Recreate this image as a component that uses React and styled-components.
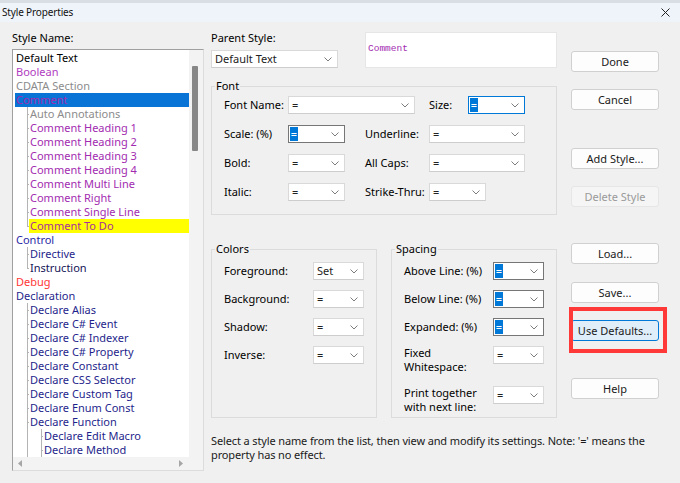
import React from 'react';
import styled, { createGlobalStyle } from 'styled-components';

const Global = createGlobalStyle`
  html, body { margin: 0; padding: 0; background: #f0f0f0; overflow: hidden; }
  body { font-family: "Noto Sans", "Open Sans", sans-serif; font-size: 11px; color: #000; }
`;

const Window = styled.div`
  width: 680px; height: 483px; display: flex; flex-direction: column;
  background: #f0f0f0; overflow: hidden;
`;
const TopStrip = styled.div`height: 3px; background: #d9dee5; flex: none;`;
const TitleBar = styled.div`
  height: 19px; flex: none; background: #eff4fa; display: flex; align-items: center;
  justify-content: space-between; padding: 0 10px 0 2px;
`;
const Title = styled.span`font-size: 10px; letter-spacing: -0.15px; color: #111; line-height: 19px;`;

const Body = styled.div`display: flex; padding: 8px 0 0 12px; flex: 1;`;
const LeftCol = styled.div`width: 192px; display: flex; flex-direction: column; flex: none;`;
const FieldLabel = styled.div`line-height: 16px; height: 16px; white-space: nowrap;`;

const ListBox = styled.div`
  margin-top: 3px; height: 422px; box-sizing: border-box; background: #fff;
  border: 1px solid; border-color: #a0a0a0 #dcdcdc #dcdcdc #a0a0a0;
  display: grid; grid-template-columns: 176px 14px; grid-template-rows: 407px 13px;
`;
const Items = styled.div`overflow: hidden; padding: 1px 0 0 2px;`;
const ItemRow = styled.div`display: flex; height: 14px;`;
const Guide = styled.span`
  position: relative; width: 14px; flex: none;
  &::before { content: ''; position: absolute; left: 12px; top: 0; width: 1px;
    height: ${p => (p.$kind === 'corner' ? '7px' : '14px')}; background: #b4b4b4; }
  &::after { content: ${p => (p.$kind === 'pipe' ? 'none' : "''")}; position: absolute; left: 12px; top: 7px;
    width: 2px; height: 1px; background: #b4b4b4; }
`;
const ItemText = styled.span`
  flex: 1; padding-left: 1px; line-height: 14px; white-space: nowrap; color: ${p => p.$c};
  background: ${p => (p.$sel ? '#0a74d6' : p.$hl ? '#ffff00' : 'transparent')};
`;
const VScroll = styled.div`grid-row: 1 / 3; grid-column: 2; background: #f3f3f3; padding: 16px 0 0 3px;`;
const Thumb = styled.div`width: 6px; height: 85px; background: #878787; border-radius: 1px;`;
const HScroll = styled.div`
  background: #f3f3f3; display: flex; align-items: center; justify-content: space-between; padding: 0 6px 0 5px;
`;

const RightArea = styled.div`margin-left: 7px; display: flex; flex-direction: column; width: 460px;`;
const TopArea = styled.div`display: flex;`;
const MidCol = styled.div`width: 346px; display: flex; flex-direction: column; flex: none;`;
const ButtonCol = styled.div`margin-left: 14px; width: 88px; display: flex; flex-direction: column; flex: none;`;

const TopRow = styled.div`display: flex; height: 38px;`;
const ParentBlock = styled.div`width: 154px; display: flex; flex-direction: column; gap: 4px;`;
const Preview = styled.div`
  margin-top: 2px; width: 192px; height: 36px; box-sizing: border-box; background: #fff;
  border: 1px solid #e6e6e6; padding: 10px 0 0 2px;
  font-family: "Liberation Mono", monospace; font-size: 9.5px; color: #a22bb0; line-height: 12px;
`;

const Group = styled.fieldset`
  margin: ${p => p.$mt || 0}px 0 0 0; padding: 0 12px; border: 1px solid #dcdcdc; box-sizing: border-box;
  width: ${p => p.$w}px; height: ${p => p.$h}px; min-width: 0;
`;
const Legend = styled.legend`padding: 0 1px; margin-left: -9px; line-height: 16px; font-size: 11px;`;
const Rows = styled.div`display: flex; flex-direction: column; gap: ${p => p.$gap}px; padding-top: ${p => p.$pt}px;`;
const Row = styled.div`display: flex; align-items: flex-start; margin-top: ${p => p.$mt || 0}px;`;
const Lbl = styled.span`
  width: ${p => p.$w}px; flex: none; line-height: ${p => (p.$multi ? '14px' : '18px')}; white-space: nowrap;
  margin-left: ${p => p.$ml || 0}px;
`;
const GroupPair = styled.div`display: flex; gap: 14px; margin-top: 26px;`;

const Combo = styled.div`
  width: ${p => p.$w}px; height: 18px; box-sizing: border-box; background: #fff; flex: none;
  border: 1px solid ${p => (p.$focus === 'blue' ? '#0078d7' : p.$focus === 'dark' ? '#767676' : '#d9d9d9')};
  border-bottom-color: ${p => (p.$focus === 'blue' ? '#0078d7' : p.$focus === 'dark' ? '#767676' : '#cdcdcd')};
  display: flex; align-items: center; padding-left: ${p => (p.$sel ? 1 : 3)}px; padding-right: 5px;
  margin-left: ${p => p.$ml || 0}px;
`;
const ComboText = styled.span`line-height: 14px; color: #222; white-space: nowrap;`;
const SelText = styled.span`
  width: 8px; height: 14px; background: #0078d7; color: #fff; line-height: 14px; text-align: center;
`;
const Chevron = styled.svg`margin-left: auto; flex: none;`;

const Btn = styled.button`
  width: 88px; height: 21px; margin-top: ${p => p.$mt}px; padding: 0; box-sizing: border-box;
  font-family: inherit; font-size: 11px; line-height: 18px; border-radius: 3px;
  background: ${p => (p.$primary ? '#e0eef9' : p.$disabled ? '#f5f5f5' : '#fdfdfd')};
  border: 1px solid ${p => (p.$primary ? '#0078d7' : p.$disabled ? '#e6e6e6' : '#d0d0d0')};
  color: ${p => (p.$disabled ? '#9a9a9a' : '#1a1a1a')};
`;
const BtnWrap = styled.div`position: relative; margin-top: ${p => p.$mt}px; display: flex;`;
const Highlight = styled.div`
  position: absolute; top: -13px; left: -2px; right: -8px; bottom: -12px; border: 4px solid #ff3838;
  pointer-events: none;
`;

const Note = styled.div`
  margin-top: 16px; line-height: 14px; color: #1a1a1a; white-space: nowrap; letter-spacing: -0.13px;
`;

const ChevronIcon = () => (
  <Chevron width="8" height="5" viewBox="0 0 8 5">
    <path d="M0.5 0.5 L4 4 L7.5 0.5" fill="none" stroke="#7d7d7d" strokeWidth="1" />
  </Chevron>
);

const ComboBox = ({ w, value = '=', focus, sel, ml }) => (
  <Combo $w={w} $focus={focus} $sel={sel} $ml={ml}>
    {sel ? <SelText>=</SelText> : <ComboText>{value}</ComboText>}
    <ChevronIcon />
  </Combo>
);

const P = '#a22bb0';
const N = '#1f1f8c';
const items = [
  { t: 'Default Text', c: '#000', g: [] },
  { t: 'Boolean', c: '#b03cc0', g: [] },
  { t: 'CDATA Section', c: '#8c8c8c', g: [] },
  { t: 'Comment', c: P, g: [], sel: true },
  { t: 'Auto Annotations', c: '#8c8c8c', g: ['tee'] },
  { t: 'Comment Heading 1', c: P, g: ['tee'] },
  { t: 'Comment Heading 2', c: P, g: ['tee'] },
  { t: 'Comment Heading 3', c: P, g: ['tee'] },
  { t: 'Comment Heading 4', c: P, g: ['tee'] },
  { t: 'Comment Multi Line', c: P, g: ['tee'] },
  { t: 'Comment Right', c: P, g: ['tee'] },
  { t: 'Comment Single Line', c: P, g: ['tee'] },
  { t: 'Comment To Do', c: '#a8309a', g: ['corner'], hl: true },
  { t: 'Control', c: '#2a2aa6', g: [] },
  { t: 'Directive', c: N, g: ['tee'] },
  { t: 'Instruction', c: '#141458', g: ['corner'] },
  { t: 'Debug', c: '#ff3636', g: [] },
  { t: 'Declaration', c: N, g: [] },
  { t: 'Declare Alias', c: N, g: ['tee'] },
  { t: 'Declare C# Event', c: N, g: ['tee'] },
  { t: 'Declare C# Indexer', c: N, g: ['tee'] },
  { t: 'Declare C# Property', c: N, g: ['tee'] },
  { t: 'Declare Constant', c: N, g: ['tee'] },
  { t: 'Declare CSS Selector', c: N, g: ['tee'] },
  { t: 'Declare Custom Tag', c: N, g: ['tee'] },
  { t: 'Declare Enum Const', c: N, g: ['tee'] },
  { t: 'Declare Function', c: N, g: ['tee'] },
  { t: 'Declare Edit Macro', c: N, g: ['pipe', 'tee'] },
  { t: 'Declare Method', c: N, g: ['pipe', 'tee'] },
];

export default function App() {
  return (
    <Window>
      <Global />
      <TopStrip />
      <TitleBar>
        <Title>Style Properties</Title>
        <svg width="9" height="9" viewBox="0 0 9 9">
          <path d="M0.5 0.5 L8.5 8.5 M8.5 0.5 L0.5 8.5" stroke="#222" strokeWidth="1" />
        </svg>
      </TitleBar>
      <Body>
        <LeftCol>
          <FieldLabel>Style Name:</FieldLabel>
          <ListBox>
            <Items>
              {items.map((it) => (
                <ItemRow key={it.t}>
                  {it.g.map((k, i) => <Guide key={i} $kind={k} />)}
                  <ItemText $c={it.c} $sel={it.sel} $hl={it.hl}>{it.t}</ItemText>
                </ItemRow>
              ))}
            </Items>
            <VScroll><Thumb /></VScroll>
            <HScroll>
              <svg width="4" height="7" viewBox="0 0 4 7"><path d="M4 0 L0 3.5 L4 7 Z" fill="#a6a6a6" /></svg>
              <svg width="4" height="7" viewBox="0 0 4 7"><path d="M0 0 L4 3.5 L0 7 Z" fill="#a6a6a6" /></svg>
            </HScroll>
          </ListBox>
        </LeftCol>
        <RightArea>
          <TopArea>
            <MidCol>
              <TopRow>
                <ParentBlock>
                  <FieldLabel>Parent Style:</FieldLabel>
                  <ComboBox w={127} value="Default Text" />
                </ParentBlock>
                <Preview>Comment</Preview>
              </TopRow>
              <Group $w={346} $h={137} $mt={10}>
                <Legend>Font</Legend>
                <Rows $gap={11} $pt={2}>
                  <Row>
                    <Lbl $w={64}>Font Name:</Lbl>
                    <ComboBox w={127} />
                    <Lbl $w={39} $ml={14}>Size:</Lbl>
                    <ComboBox w={57} focus="blue" sel />
                  </Row>
                  <Row>
                    <Lbl $w={64}>Scale: (%)</Lbl>
                    <ComboBox w={57} focus="dark" sel />
                    <Lbl $w={64} $ml={20}>Underline:</Lbl>
                    <ComboBox w={96} />
                  </Row>
                  <Row>
                    <Lbl $w={64}>Bold:</Lbl>
                    <ComboBox w={57} />
                    <Lbl $w={64} $ml={20}>All Caps:</Lbl>
                    <ComboBox w={96} />
                  </Row>
                  <Row>
                    <Lbl $w={64}>Italic:</Lbl>
                    <ComboBox w={57} />
                    <Lbl $w={64} $ml={20}>Strike-Thru:</Lbl>
                    <ComboBox w={57} />
                  </Row>
                </Rows>
              </Group>
              <GroupPair>
                <Group $w={166} $h={177}>
                  <Legend>Colors</Legend>
                  <Rows $gap={10} $pt={5}>
                    <Row><Lbl $w={89}>Foreground:</Lbl><ComboBox w={51} value="Set" /></Row>
                    <Row><Lbl $w={89}>Background:</Lbl><ComboBox w={51} /></Row>
                    <Row><Lbl $w={89}>Shadow:</Lbl><ComboBox w={51} /></Row>
                    <Row><Lbl $w={89}>Inverse:</Lbl><ComboBox w={51} /></Row>
                  </Rows>
                </Group>
                <Group $w={166} $h={177}>
                  <Legend>Spacing</Legend>
                  <Rows $gap={10} $pt={5}>
                    <Row><Lbl $w={89}>Above Line: (%)</Lbl><ComboBox w={51} focus="dark" sel /></Row>
                    <Row><Lbl $w={89}>Below Line: (%)</Lbl><ComboBox w={51} focus="dark" sel /></Row>
                    <Row><Lbl $w={89}>Expanded: (%)</Lbl><ComboBox w={51} focus="dark" sel /></Row>
                    <Row><Lbl $w={89} $multi>Fixed<br />Whitespace:</Lbl><ComboBox w={51} /></Row>
                    <Row $mt={2}><Lbl $w={89} $multi>Print together<br />with next line:</Lbl><ComboBox w={51} /></Row>
                  </Rows>
                </Group>
              </GroupPair>
            </MidCol>
            <ButtonCol>
              <Btn $mt={21}>Done</Btn>
              <Btn $mt={17}>Cancel</Btn>
              <Btn $mt={38}>Add Style...</Btn>
              <Btn $mt={17} $disabled>Delete Style</Btn>
              <Btn $mt={36}>Load...</Btn>
              <Btn $mt={18}>Save...</Btn>
              <BtnWrap $mt={17}>
                <Btn $mt={0} $primary>Use Defaults...</Btn>
                <Highlight />
              </BtnWrap>
              <Btn $mt={37}>Help</Btn>
            </ButtonCol>
          </TopArea>
          <Note>
            Select a style name from the list, then view and modify its settings. Note: '=' means the
            <br />
            property has no effect.
          </Note>
        </RightArea>
      </Body>
    </Window>
  );
}
